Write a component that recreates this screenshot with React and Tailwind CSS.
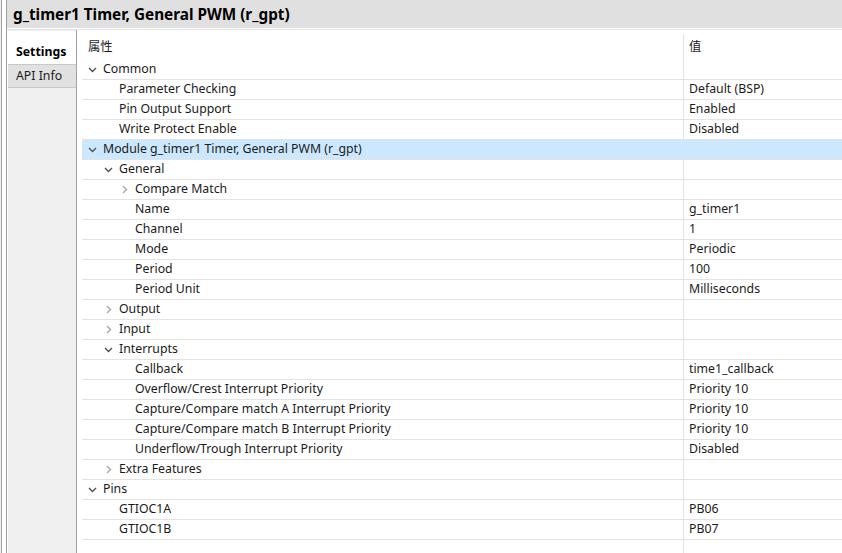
import React from 'react'

const ROWS = [
  { level: 0, label: 'Common', exp: true },
  { level: 1, label: 'Parameter Checking', value: 'Default (BSP)' },
  { level: 1, label: 'Pin Output Support', value: 'Enabled' },
  { level: 1, label: 'Write Protect Enable', value: 'Disabled' },
  { level: 0, label: 'Module g_timer1 Timer, General PWM (r_gpt)', exp: true, selected: true },
  { level: 1, label: 'General', exp: true },
  { level: 2, label: 'Compare Match', exp: false },
  { level: 2, label: 'Name', value: 'g_timer1' },
  { level: 2, label: 'Channel', value: '1' },
  { level: 2, label: 'Mode', value: 'Periodic' },
  { level: 2, label: 'Period', value: '100' },
  { level: 2, label: 'Period Unit', value: 'Milliseconds' },
  { level: 1, label: 'Output', exp: false },
  { level: 1, label: 'Input', exp: false },
  { level: 1, label: 'Interrupts', exp: true },
  { level: 2, label: 'Callback', value: 'time1_callback' },
  { level: 2, label: 'Overflow/Crest Interrupt Priority', value: 'Priority 10' },
  { level: 2, label: 'Capture/Compare match A Interrupt Priority', value: 'Priority 10' },
  { level: 2, label: 'Capture/Compare match B Interrupt Priority', value: 'Priority 10' },
  { level: 2, label: 'Underflow/Trough Interrupt Priority', value: 'Disabled' },
  { level: 1, label: 'Extra Features', exp: false },
  { level: 0, label: 'Pins', exp: true },
  { level: 1, label: 'GTIOC1A', value: 'PB06' },
  { level: 1, label: 'GTIOC1B', value: 'PB07' },
]

const INDENT = ['pl-[21px]', 'pl-[37px]', 'pl-[53px]']

function Chevron({ open }) {
  if (open) {
    return (
      <svg width="9" height="6" viewBox="0 0 9 6" className="absolute -ml-[15px]">
        <path d="M1 1 L4.5 4.5 L8 1" fill="none" stroke="#505050" strokeWidth="1.4" />
      </svg>
    )
  }
  return (
    <svg width="6" height="9" viewBox="0 0 6 9" className="absolute -ml-[13px]">
      <path d="M1 1 L4.5 4.5 L1 8" fill="none" stroke="#a6a6a6" strokeWidth="1.4" />
    </svg>
  )
}

export default function App() {
  return (
    <div className="flex h-[553px] w-[842px] overflow-hidden bg-white text-[12.3px] text-[#1a1a1a]" style={{ fontFamily: '"Noto Sans", "Noto Sans CJK SC", sans-serif' }}>
      {/* outer frame */}
      <div className="w-[1px] bg-[#f0f0f0]" />
      <div className="w-[1px] bg-[#a0a0a0]" />
      <div className="w-[4px] bg-white" />
      <div className="w-[1px] bg-[#a0a0a0]" />

      <div className="flex min-w-0 flex-1 flex-col">
        {/* Title */}
        <div className="flex h-[28px] items-center bg-[#e0e0e0] pl-[6px] text-[15.3px] font-bold text-black">
          g_timer1 Timer, General PWM (r_gpt)
        </div>
        <div className="h-[1px] bg-white" />
        <div className="h-[1px] bg-[#e3e3e3]" />

        <div className="flex min-h-0 flex-1">
          {/* Sidebar tabs */}
          <div className="ml-[1px] flex w-[69px] flex-col border-r border-[#a0a0a0] bg-[#f0f0f0] pt-[1px]">
            <div className="flex h-[33px] items-center bg-white pl-[8px] pt-[10px] font-bold text-black">Settings</div>
            <div className="flex h-[24px] items-center border-y border-[#c8c8c8] bg-[#e1e1e1] pl-[8px] pt-[1px]">API Info</div>
          </div>

          {/* Property table */}
          <div className="flex min-w-0 flex-1 flex-col pl-[5px] pt-[4px]">
            <div className="flex h-[26px]">
              <div className="flex w-[601px] items-center pl-[6px]">属性</div>
              <div className="flex flex-1 items-center border-l border-[#e3e3e3] pl-[5px]">值</div>
            </div>
            {ROWS.map((r, i) => (
              <div
                key={i}
                className={
                  'flex h-[20px] border-b border-[#e3e3e3] ' + (r.selected ? 'bg-[#cce8ff]' : '')
                }
              >
                <div className={'relative flex w-[601px] items-center whitespace-nowrap ' + INDENT[r.level]}>
                  {r.exp !== undefined && <Chevron open={r.exp} />}
                  {r.label}
                </div>
                <div className={'flex flex-1 items-center pl-[5px] ' + (r.selected ? '' : 'border-l border-[#e3e3e3]')}>
                  {r.value}
                </div>
              </div>
            ))}
            <div className="flex flex-1">
              <div className="w-[601px]" />
              <div className="flex-1 border-l border-[#e3e3e3]" />
            </div>
          </div>
        </div>
      </div>
    </div>
  )
}
